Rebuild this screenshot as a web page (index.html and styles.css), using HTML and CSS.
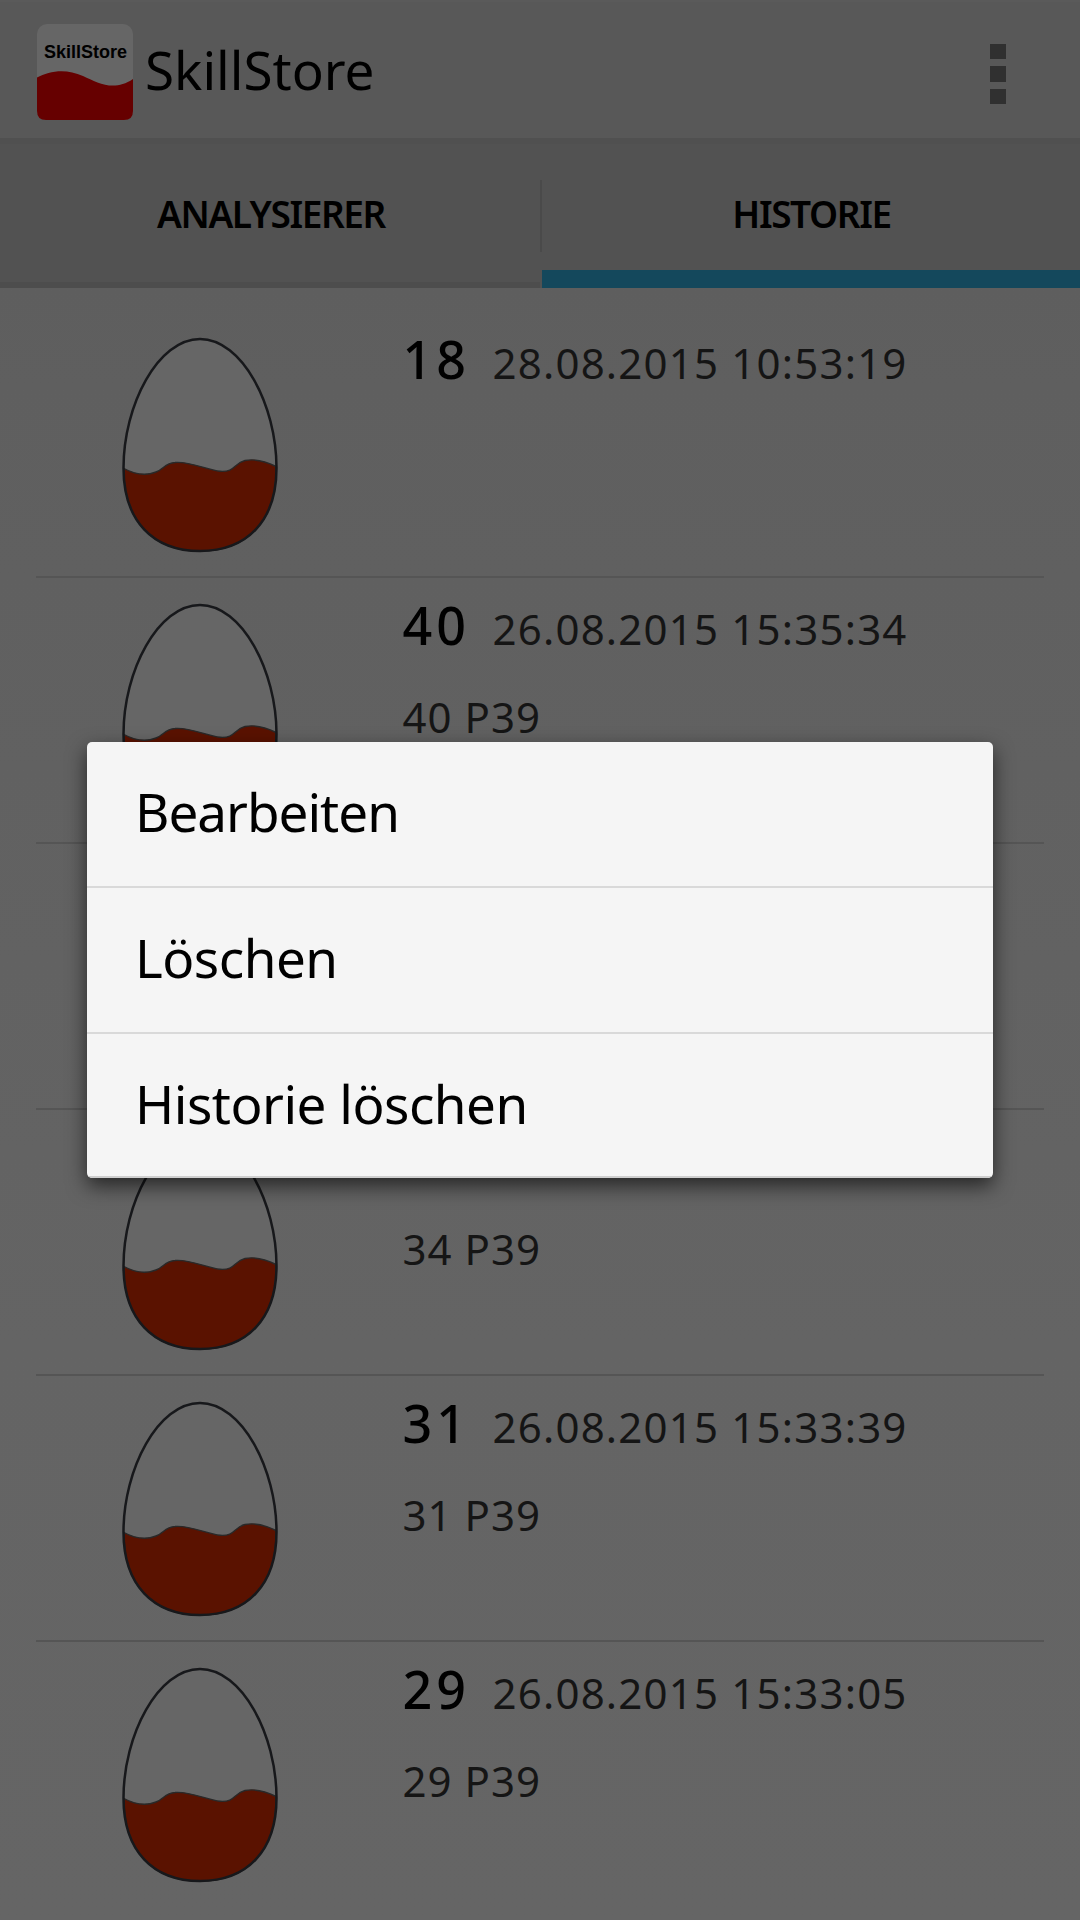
FILE: index.html
```html
<!DOCTYPE html>
<html lang="de">
<head>
<meta charset="utf-8">
<title>SkillStore</title>
<link rel="stylesheet" href="styles.css">
</head>
<body>
<svg class="defs" width="0" height="0" aria-hidden="true">
  <symbol id="egg" viewBox="0 0 156 216">
    <path d="M78 2C120 2 154.500 68 154.500 131C154.500 184 125 214 78 214C31 214 1.500 184 1.500 131C1.500 68 36 2 78 2Z" fill="#666"/>
    <path d="M2 131.500C12 137 24 139 34 135C42 132 43 126 53 125.500C67 124 85 133 98 134.300C113 135.500 112 126 123 123.500C134 121.500 144 124.500 154 129.500C155 184 125 214 78 214C31 214 1.500 184 2 131.500Z" fill="#5a1200" stroke="#292929" stroke-width="1.400"/>
    <path d="M78 2C120 2 154.500 68 154.500 131C154.500 184 125 214 78 214C31 214 1.500 184 1.500 131C1.500 68 36 2 78 2Z" fill="none" stroke="#17181b" stroke-width="2.500"/>
  </symbol>
</svg>
<div class="screen">
  <header class="bar">
    <svg class="logo" width="96" height="96" viewBox="0 0 96 96">
      <rect width="96" height="96" rx="10" fill="#666"/>
      <path d="M0 53.500C12 47 29 44 46 52C61 59 77 68 96 55V87Q96 96 87 96H9Q0 96 0 87Z" fill="#600"/>
      <text class="logo-text" x="7" y="33.500" textLength="83" lengthAdjust="spacingAndGlyphs">SkillStore</text>
    </svg>
    <h1 class="title">SkillStore</h1>
    <div class="overflow"><i></i><i></i><i></i></div>
  </header>
  <nav class="tabs">
    <div class="tab">ANALYSIERER</div>
    <div class="separator"></div>
    <div class="tab active">HISTORIE</div>
  </nav>
  <main class="list">
    <article class="row"><svg class="egg"><use href="#egg"/></svg><div class="info"><div class="line"><b class="score">18</b><span class="small date">28.08.2015 10:53:19</span></div></div></article>
    <article class="row"><svg class="egg"><use href="#egg"/></svg><div class="info"><div class="line"><b class="score">40</b><span class="small date">26.08.2015 15:35:34</span></div><div class="small note">40 P39</div></div></article>
    <article class="row"></article>
    <article class="row"><svg class="egg"><use href="#egg"/></svg><div class="info"><div class="line"></div><div class="small note">34 P39</div></div></article>
    <article class="row"><svg class="egg"><use href="#egg"/></svg><div class="info"><div class="line"><b class="score">31</b><span class="small date">26.08.2015 15:33:39</span></div><div class="small note">31 P39</div></div></article>
    <article class="row"><svg class="egg"><use href="#egg"/></svg><div class="info"><div class="line"><b class="score">29</b><span class="small date">26.08.2015 15:33:05</span></div><div class="small note">29 P39</div></div></article>
  </main>
  <div class="menu">
    <div class="item edit">Bearbeiten</div>
    <div class="item">Löschen</div>
    <div class="item">Historie löschen</div>
  </div>
</div>
</body>
</html>
```
FILE: styles.css
```css
* { box-sizing: border-box; }
body { margin: 0; background: #646464; font-family: "Noto Sans", sans-serif; color: #000; }
.defs { display: block; position: absolute; }
.screen { position: relative; width: 1080px; height: 1920px; overflow: hidden; display: flex; flex-direction: column; background: linear-gradient(#5b5b5b, #5f5f5f 20%, #646464 70%, #656565); }
.bar { height: 138px; flex: none; display: flex; align-items: center; padding: 0 74px 0 37px; background: #585858; border-top: 2px solid #5a5a5a; }
.logo { flex: none; margin-top: 4px; }
.logo-text { font: bold 18px "Liberation Sans", sans-serif; fill: #000; }
.title { margin: 0 auto 0 12px; font-size: 53px; font-weight: 400; line-height: 72px; letter-spacing: 0; white-space: nowrap; }
.overflow { display: flex; flex-direction: column; gap: 7px; margin-top: 8px; }
.overflow i { width: 16px; height: 15.500px; background: #303030; }
.tabs { height: 150px; flex: none; display: grid; grid-template-columns: 540px 2px 538px; background: #525252; border-top: 6px solid #505050; }
.tab { display: flex; align-items: center; justify-content: center; padding-top: 2px; padding-left: 2px; border-bottom: 6px solid #4d4d4d; font-size: 37px; font-weight: 600; line-height: 50px; letter-spacing: -1.4px; white-space: nowrap; }
.tab.active { border-bottom: 18px solid #14485c; padding-top: 14px; padding-left: 1px; }
.separator { width: 2px; height: 72px; margin-top: 36px; background: #4a4a4a; }
.list { margin: 24px 36px 0; display: flex; flex-direction: column; }
.row { height: 266px; flex: none; display: flex; border-bottom: 2px solid #555; }
.row:last-child { border-bottom: none; }
.egg { width: 156px; height: 216px; flex: none; margin: 25px 0 0 86px; }
.info { margin-left: 124.500px; padding-top: 11px; display: flex; flex-direction: column; gap: 26px; }
.line { height: 72px; display: flex; align-items: baseline; line-height: 72px; white-space: nowrap; }
.score { width: 90px; font-size: 52px; font-weight: 500; letter-spacing: 4px; }
.small { font-size: 42px; font-weight: 450; color: #151515; }
.date { letter-spacing: 1.2px; }
.note { line-height: 60px; letter-spacing: 1px; }
.menu { position: absolute; left: 87px; top: 742px; width: 906px; height: 436px; border-radius: 5px; background: #f5f5f5; overflow: hidden; box-shadow: 0 8px 20px rgba(0, 0, 0, 0.62); display: flex; flex-direction: column; }
.item { height: 146px; flex: none; padding: 0 48px 6px; display: flex; align-items: center; font-size: 53px; letter-spacing: -0.5px; white-space: nowrap; border-bottom: 2px solid #d9d9d9; }
.item:last-child { height: 144px; border-bottom: 2px solid #cfcfcf; padding-bottom: 4px; }
.edit { letter-spacing: -1px; }
```
